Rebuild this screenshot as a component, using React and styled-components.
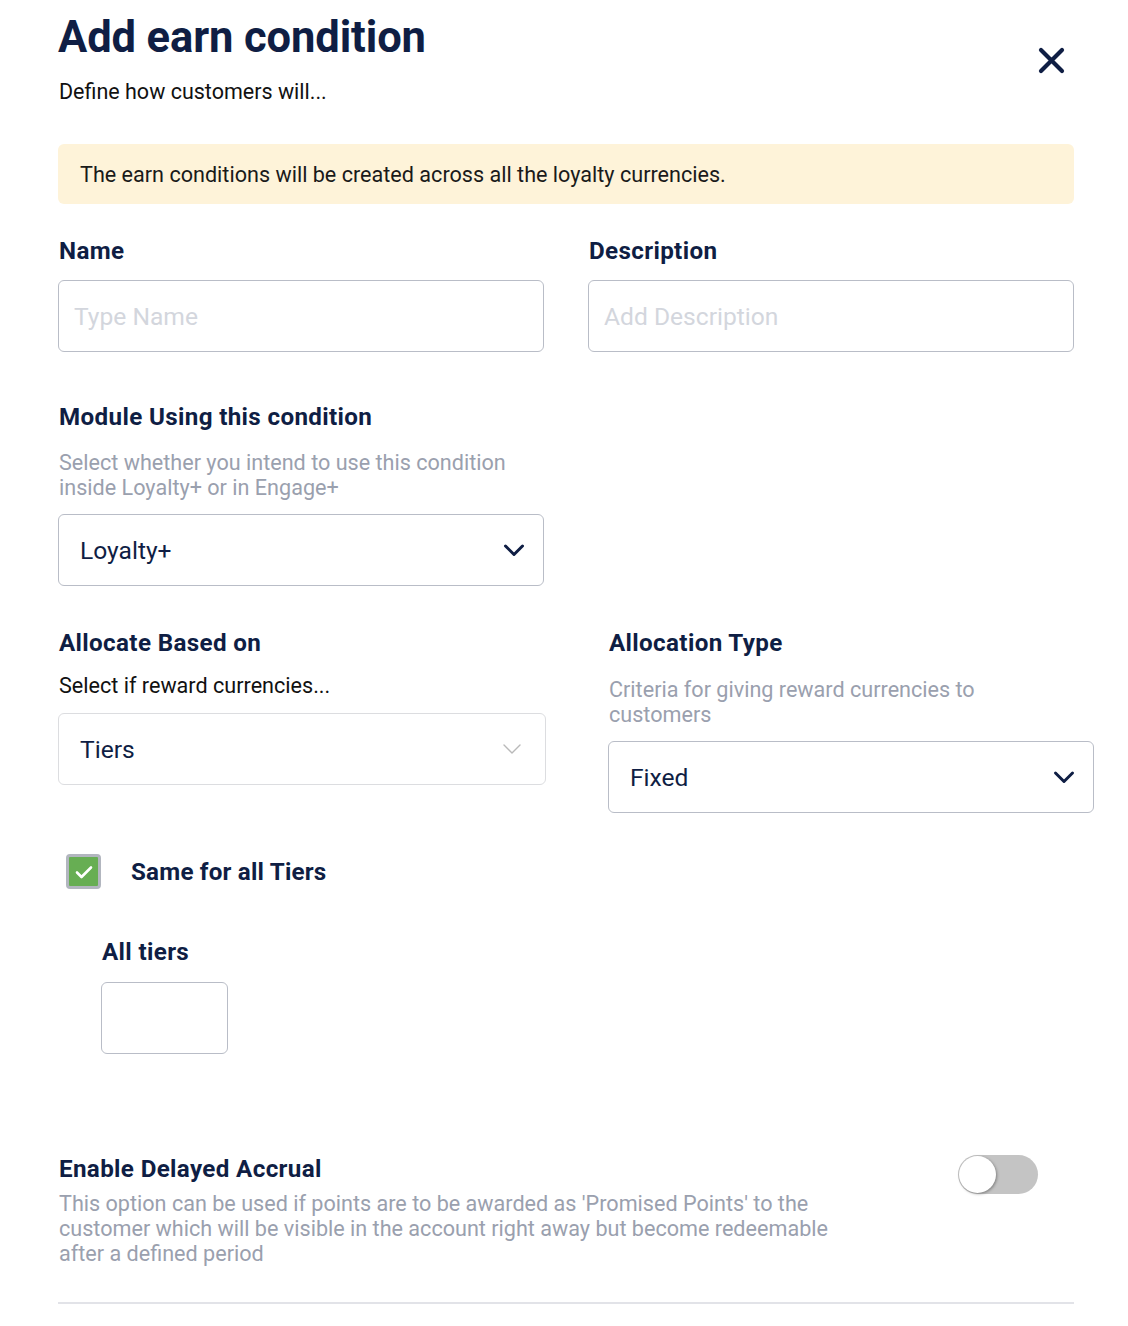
import React from 'react';
import styled, { createGlobalStyle } from 'styled-components';

const GlobalStyle = createGlobalStyle`
  body {
    margin: 0;
    background: #ffffff;
    font-family: Roboto, 'Liberation Sans', sans-serif;
  }
  * { box-sizing: border-box; }
`;

const navy = '#0f1e44';
const muted = '#9aa0ae';

const Page = styled.div`
  width: 1016px;
  margin-left: 58px;
  padding-top: 12px;
  padding-bottom: 22px;
`;

const Header = styled.header`
  display: flex;
  justify-content: space-between;
  align-items: flex-start;
`;

const Title = styled.h1`
  margin: 0;
  font-size: 43.5px;
  line-height: 52px;
  font-weight: 700;
  color: ${navy};
  letter-spacing: -0.1px;
`;

const Subtitle = styled.p`
  margin: 16px 0 0 1px;
  font-size: 21.5px;
  line-height: 24px;
  color: #111111;
`;

const CloseButton = styled.button`
  border: none;
  background: none;
  padding: 0;
  margin: 35px 9px 0 0;
  width: 27px;
  height: 27px;
  cursor: pointer;
  display: flex;
`;

const Banner = styled.div`
  margin-top: 40px;
  height: 60px;
  background: #fef3d9;
  border-radius: 6px;
  display: flex;
  align-items: center;
  padding: 0 22px;
  font-size: 21.6px;
  color: #1a1a1a;
`;

const Grid = styled.div`
  display: grid;
  grid-template-columns: 486px 486px;
  column-gap: 44px;
  margin-top: ${p => p.$top}px;
`;

const Field = styled.div`
  display: flex;
  flex-direction: column;
  margin-left: ${p => p.$shift || 0}px;
`;

const Label = styled.label`
  font-size: 24.2px;
  line-height: 28px;
  font-weight: 700;
  letter-spacing: 0.35px;
  color: ${navy};
  margin-left: 1px;
`;

const Help = styled.p`
  margin: ${p => p.$top}px 0 0 1px;
  font-size: 21.6px;
  line-height: 25px;
  color: ${p => (p.$dark ? '#111111' : muted)};
  max-width: ${p => p.$max || 486}px;
`;

const Input = styled.input`
  margin-top: ${p => p.$top || 15}px;
  width: ${p => p.$width || '100%'};
  height: 72px;
  border: 1px solid #b9bdc7;
  border-radius: 6px;
  padding: 0 15px;
  font-family: inherit;
  font-size: 24.6px;
  color: ${navy};
  outline: none;
  &::placeholder {
    color: #d3d6dd;
  }
`;

const Select = styled.div`
  margin-top: ${p => p.$top}px;
  width: ${p => p.$width || 486}px;
  height: 72px;
  border: 1px solid ${p => (p.$disabled ? '#dcdde0' : '#b9bdc7')};
  border-radius: 6px;
  display: flex;
  align-items: center;
  justify-content: space-between;
  padding: 0 ${p => (p.$disabled ? 22 : 18)}px 0 21px;
  font-size: 24.6px;
  color: ${navy};
`;

const CheckRow = styled.div`
  margin-top: 41px;
  margin-left: 8px;
  display: flex;
  align-items: center;
  gap: 30px;
`;

const CheckBox = styled.span`
  width: 35px;
  height: 35px;
  border: 3px solid #b2b6bf;
  border-radius: 4px;
  background: #67ae53;
  display: flex;
  align-items: center;
  justify-content: center;
`;

const CheckLabel = styled.span`
  font-size: 24.2px;
  font-weight: 700;
  letter-spacing: 0.2px;
  color: ${navy};
`;

const TierBlock = styled.div`
  margin: 49px 0 0 43px;
  display: flex;
  flex-direction: column;
`;

const AccrualRow = styled.div`
  margin-top: 101px;
  display: flex;
  justify-content: space-between;
  align-items: flex-start;
`;

const AccrualText = styled.div`
  display: flex;
  flex-direction: column;
`;

const Toggle = styled.div`
  width: 80px;
  height: 39px;
  margin-right: 36px;
  border-radius: 20px;
  background: #c4c4c4;
  position: relative;
`;

const Knob = styled.span`
  position: absolute;
  left: 1px;
  top: 1px;
  width: 37px;
  height: 37px;
  border-radius: 50%;
  background: #ffffff;
  box-shadow: 1px 1px 3px rgba(0, 0, 0, 0.35);
`;

const Divider = styled.hr`
  margin: 36px 0 0;
  border: none;
  height: 2px;
  background: #e2e3e8;
`;

const Chevron = ({ light }) => (
  <svg width="22" height="14" viewBox="0 0 22 14" fill="none">
    <path
      d={light ? 'M3 3l8 8 8-8' : 'M2.5 3l8.5 8.5L19.5 3'}
      stroke={light ? '#b9b9b9' : navy}
      strokeWidth={light ? 1.4 : 3}
      strokeLinecap="round"
      strokeLinejoin="round"
    />
  </svg>
);

const App = () => (
  <>
    <GlobalStyle />
    <Page>
      <Header>
        <div>
          <Title>Add earn condition</Title>
          <Subtitle>Define how customers will...</Subtitle>
        </div>
        <CloseButton aria-label="Close">
          <svg width="27" height="27" viewBox="0 0 27 27" fill="none">
            <path d="M3 3l21 21M24 3L3 24" stroke={navy} strokeWidth="4.2" strokeLinecap="round" />
          </svg>
        </CloseButton>
      </Header>

      <Banner>The earn conditions will be created across all the loyalty currencies.</Banner>

      <Grid $top={33}>
        <Field>
          <Label>Name</Label>
          <Input placeholder="Type Name" />
        </Field>
        <Field>
          <Label>Description</Label>
          <Input placeholder="Add Description" />
        </Field>
      </Grid>

      <Grid $top={51}>
        <Field>
          <Label>Module Using this condition</Label>
          <Help $top={19}>Select whether you intend to use this condition inside Loyalty+ or in Engage+</Help>
          <Select $top={14}>
            Loyalty+
            <Chevron />
          </Select>
        </Field>
      </Grid>

      <Grid $top={43}>
        <Field>
          <Label>Allocate Based on</Label>
          <Help $top={16} $dark>Select if reward currencies...</Help>
          <Select $top={15} $width={488} $disabled>
            Tiers
            <Chevron light />
          </Select>
        </Field>
        <Field $shift={20}>
          <Label>Allocation Type</Label>
          <Help $top={20} $max={420}>Criteria for giving reward currencies to customers</Help>
          <Select $top={14}>
            Fixed
            <Chevron />
          </Select>
        </Field>
      </Grid>

      <CheckRow>
        <CheckBox>
          <svg width="18" height="14" viewBox="0 0 18 14" fill="none">
            <path d="M2 7.5l4.5 4.5L16 2.5" stroke="#ffffff" strokeWidth="2.6" strokeLinecap="round" strokeLinejoin="round" />
          </svg>
        </CheckBox>
        <CheckLabel>Same for all Tiers</CheckLabel>
      </CheckRow>

      <TierBlock>
        <Label>All tiers</Label>
        <Input $top={16} $width="127px" />
      </TierBlock>

      <AccrualRow>
        <AccrualText>
          <Label>Enable Delayed Accrual</Label>
          <Help $top={8} $max={790}>
            This option can be used if points are to be awarded as 'Promised Points' to the customer which will be
            visible in the account right away but become redeemable after a defined period
          </Help>
        </AccrualText>
        <Toggle>
          <Knob />
        </Toggle>
      </AccrualRow>

      <Divider />
    </Page>
  </>
);

export default App;
